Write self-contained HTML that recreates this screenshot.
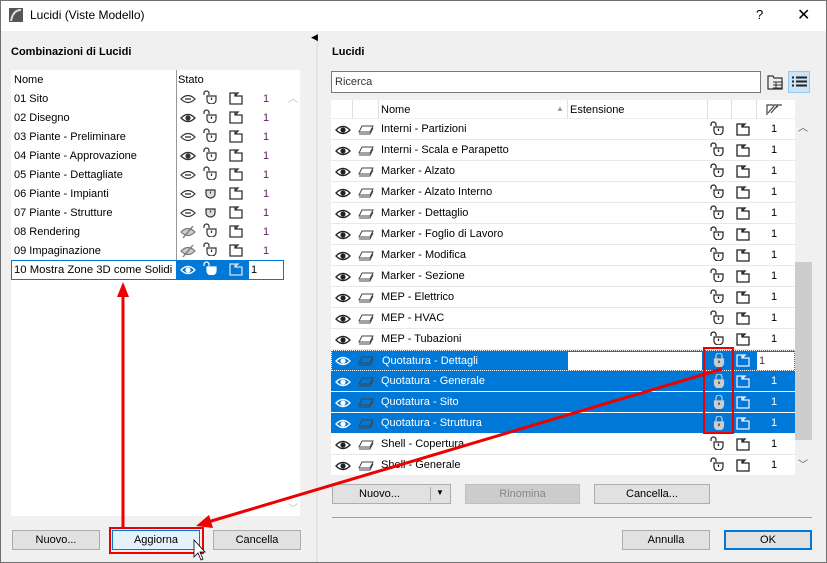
<!DOCTYPE html>
<html><head><meta charset="utf-8"><style>
*{margin:0;padding:0;box-sizing:border-box}
body{width:827px;height:563px;overflow:hidden;font-family:"Liberation Sans",sans-serif;font-size:11px;color:#000;background:#f0f0f0;position:relative}
.a{position:absolute}
.t{position:absolute;white-space:nowrap}
.btn{position:absolute;height:20px;border:1px solid #adadad;background:#e1e1e1;text-align:center;line-height:18px;font-size:11px}
svg{position:absolute;overflow:visible}
.row{position:absolute;left:0;width:464px;height:21px;border-bottom:1px solid #e8e8e8}
.sel{background:#0078d7;color:#fff;border-bottom:1px solid #fff}
</style></head><body>
<svg width="0" height="0" style="position:absolute">
<defs>
<symbol id="eye" viewBox="0 0 16 12"><path d="M1 6Q8 -1 15 6Q8 13 1 6Z" fill="none" stroke="currentColor" stroke-width="1.3"/><circle cx="8" cy="6" r="2.6" fill="currentColor"/></symbol>
<symbol id="eyed" viewBox="0 0 16 12"><path d="M1 6Q8 -1 15 6Q8 13 1 6Z" fill="none" stroke="currentColor" stroke-width="1.2"/><path d="M5 6H11" stroke="currentColor" stroke-width="1.3"/></symbol>
<symbol id="eyex" viewBox="0 0 16 12"><path d="M1 6Q8 -1 15 6Q8 13 1 6Z" fill="#ccc" stroke="#777" stroke-width="1.2"/><path d="M3 12L13 0" stroke="#777" stroke-width="1.3"/></symbol>
<symbol id="lay" viewBox="0 0 16 10"><path d="M4 1H15L12 7H1Z M1 9H12L15 3" fill="none" stroke="currentColor" stroke-width="1"/></symbol>
<symbol id="lko" viewBox="0 0 14 14"><path d="M1 5V3.5A2.5 2.5 0 0 1 6 3.5V5" fill="none" stroke="currentColor" stroke-width="1.2"/><path d="M4 6H13V10A4.5 4 0 0 1 4 10Z" fill="#fff" stroke="currentColor" stroke-width="1.2"/><path d="M8.5 7.5V10" stroke="currentColor" stroke-width="1.3"/></symbol>
<symbol id="lkc" viewBox="0 0 14 14"><path d="M4 3V6M10 3V6" stroke="currentColor" stroke-width="1.2"/><path d="M4 3A3 3 0 0 1 10 3" fill="none" stroke="currentColor" stroke-width="1.2"/><path d="M2.5 6H11.5V10A4.5 4 0 0 1 2.5 10Z" fill="#ccc" stroke="#ccc" stroke-width="1.2"/><path d="M7 7.5V10" stroke="#333" stroke-width="1.3"/></symbol>
<symbol id="sh" viewBox="0 0 14 14"><path d="M3 5H12V9A4.5 4 0 0 1 3 9Z" fill="#ddd" stroke="currentColor" stroke-width="1.2"/><path d="M7.5 6.5V8.5" stroke="currentColor" stroke-width="1.2"/></symbol>
<symbol id="doc" viewBox="0 0 14 14"><path d="M1 2H6V5H13V13H1Z M6 5L9 2H6" fill="none" stroke="currentColor" stroke-width="1.3"/></symbol>
</defs></svg>

<div class="a" style="left:0;top:0;width:827px;height:563px;border:1px solid #707070"></div>
<div class="a" style="left:1px;top:1px;width:825px;height:30px;background:#fff"></div>
<svg style="left:9px;top:8px" width="14" height="14"><rect width="14" height="14" fill="#555"/><path d="M2 13Q4 2 12 2" stroke="#ddd" stroke-width="2" fill="none"/></svg>
<div class="t" style="left:30px;top:8px;font-size:12px">Lucidi (Viste Modello)</div>
<div class="t" style="left:756px;top:7px;font-size:13px">?</div>
<div class="t" style="left:797px;top:5px;font-size:16px">✕</div>

<div class="a" style="left:316px;top:32px;width:2px;height:530px;background:#e4e4e4"></div>
<div class="t" style="left:311px;top:32px;font-size:9px">◀</div>

<div class="t" style="left:11px;top:46px;font-weight:bold;font-size:11px">Combinazioni di Lucidi</div>
<div class="a" style="left:11px;top:70px;width:289px;height:446px;background:#fff"></div>
<div class="a" style="left:283px;top:89px;width:17px;height:427px;background:#fff"></div>
<div class="a" style="left:176px;top:70px;width:1px;height:191px;background:#999"></div>
<div class="t" style="left:14px;top:74px">Nome</div>
<div class="t" style="left:178px;top:74px">Stato</div>
<div class="t" style="left:288px;top:90px;color:#bbb;font-size:10px">︿</div>
<div class="t" style="left:288px;top:500px;color:#bbb;font-size:10px">﹀</div>

<div class="t" style="left:14px;top:93px">01 Sito</div>
<div class="t" style="left:14px;top:112px">02 Disegno</div>
<div class="t" style="left:14px;top:131px">03 Piante - Preliminare</div>
<div class="t" style="left:14px;top:150px">04 Piante - Approvazione</div>
<div class="t" style="left:14px;top:169px">05 Piante - Dettagliate</div>
<div class="t" style="left:14px;top:188px">06 Piante - Impianti</div>
<div class="t" style="left:14px;top:207px">07 Piante - Strutture</div>
<div class="t" style="left:14px;top:226px">08 Rendering</div>
<div class="t" style="left:14px;top:245px">09 Impaginazione</div>

<div style="color:#333">
<svg style="left:180px;top:93px" width="16" height="12"><use href="#eyed"/></svg>
<svg style="left:180px;top:112px" width="16" height="12"><use href="#eye"/></svg>
<svg style="left:180px;top:131px" width="16" height="12"><use href="#eyed"/></svg>
<svg style="left:180px;top:150px" width="16" height="12"><use href="#eye"/></svg>
<svg style="left:180px;top:169px" width="16" height="12"><use href="#eyed"/></svg>
<svg style="left:180px;top:188px" width="16" height="12"><use href="#eyed"/></svg>
<svg style="left:180px;top:207px" width="16" height="12"><use href="#eyed"/></svg>
<svg style="left:180px;top:226px" width="16" height="12"><use href="#eyex"/></svg>
<svg style="left:180px;top:245px" width="16" height="12"><use href="#eyex"/></svg>

<svg style="left:203px;top:90px" width="14" height="14"><use href="#lko"/></svg>
<svg style="left:203px;top:109px" width="14" height="14"><use href="#lko"/></svg>
<svg style="left:203px;top:128px" width="14" height="14"><use href="#lko"/></svg>
<svg style="left:203px;top:147px" width="14" height="14"><use href="#lko"/></svg>
<svg style="left:203px;top:166px" width="14" height="14"><use href="#lko"/></svg>
<svg style="left:203px;top:185px" width="14" height="14"><use href="#sh"/></svg>
<svg style="left:203px;top:204px" width="14" height="14"><use href="#sh"/></svg>
<svg style="left:203px;top:223px" width="14" height="14"><use href="#lko"/></svg>
<svg style="left:203px;top:242px" width="14" height="14"><use href="#lko"/></svg>

<svg style="left:229px;top:91px" width="14" height="14"><use href="#doc"/></svg>
<svg style="left:229px;top:110px" width="14" height="14"><use href="#doc"/></svg>
<svg style="left:229px;top:129px" width="14" height="14"><use href="#doc"/></svg>
<svg style="left:229px;top:148px" width="14" height="14"><use href="#doc"/></svg>
<svg style="left:229px;top:167px" width="14" height="14"><use href="#doc"/></svg>
<svg style="left:229px;top:186px" width="14" height="14"><use href="#doc"/></svg>
<svg style="left:229px;top:205px" width="14" height="14"><use href="#doc"/></svg>
<svg style="left:229px;top:224px" width="14" height="14"><use href="#doc"/></svg>
<svg style="left:229px;top:243px" width="14" height="14"><use href="#doc"/></svg>
</div>
<div style="color:#602060">
<div class="t" style="left:263px;top:93px">1</div><div class="t" style="left:263px;top:112px">1</div><div class="t" style="left:263px;top:131px">1</div><div class="t" style="left:263px;top:150px">1</div><div class="t" style="left:263px;top:169px">1</div><div class="t" style="left:263px;top:188px">1</div><div class="t" style="left:263px;top:207px">1</div><div class="t" style="left:263px;top:226px">1</div><div class="t" style="left:263px;top:245px">1</div>
</div>
<div class="a" style="left:11px;top:260px;width:273px;height:20px;border:1px solid #0078d7;background:#fff"></div>
<div class="a" style="left:176px;top:261px;width:73px;height:18px;background:#0078d7"></div>
<div class="t" style="left:14px;top:264px;font-size:11.3px">10 Mostra Zone 3D come Solidi</div>
<svg style="left:180px;top:264px;color:#fff" width="16" height="12"><use href="#eye"/></svg>
<svg style="left:203px;top:261px;color:#fff" width="14" height="14"><use href="#lko"/></svg>
<svg style="left:229px;top:262px;color:#dde" width="14" height="14"><use href="#doc"/></svg>
<div class="t" style="left:251px;top:264px">1</div>

<div class="btn" style="left:12px;top:530px;width:88px">Nuovo...</div>
<div class="btn" style="left:112px;top:530px;width:88px;background:#e5f1fb;border-color:#0078d7">Aggiorna</div>
<div class="btn" style="left:213px;top:530px;width:88px">Cancella</div>

<div class="t" style="left:332px;top:46px;font-weight:bold">Lucidi</div>
<div class="a" style="left:331px;top:71px;width:430px;height:22px;background:#fff;border:1px solid #7a7a7a"></div>
<div class="t" style="left:335px;top:76px;color:#333">Ricerca</div>
<svg style="left:767px;top:74px" width="18" height="16"><path d="M1 2H6L7 4H15V15H1Z" fill="none" stroke="#333" stroke-width="1.2"/><path d="M6 8H16M6 11H16M6 14H16M9 8V15" stroke="#333"/></svg>
<div class="a" style="left:788px;top:71px;width:22px;height:22px;background:#cce4f7;border:1px solid #99c9ef"></div>
<svg style="left:792px;top:76px" width="15" height="12"><path d="M0 1.5H2M4 1.5H15M0 5.5H2M4 5.5H15M0 9.5H2M4 9.5H15" stroke="#222" stroke-width="2"/></svg>

<div class="a" style="left:331px;top:100px;width:464px;height:375px;background:#fff;overflow:hidden">
 <div class="a" style="left:0;top:0;width:464px;height:19px;background:#fff;border-bottom:1px solid #eee"></div>
 <div class="a" style="left:21px;top:0;width:1px;height:19px;background:#e0e0e0"></div>
 <div class="a" style="left:47px;top:0;width:1px;height:19px;background:#e0e0e0"></div>
 <div class="a" style="left:236px;top:0;width:1px;height:19px;background:#e0e0e0"></div>
 <div class="a" style="left:376px;top:0;width:1px;height:19px;background:#e0e0e0"></div>
 <div class="a" style="left:400px;top:0;width:1px;height:19px;background:#e0e0e0"></div>
 <div class="a" style="left:425px;top:0;width:1px;height:19px;background:#e0e0e0"></div>
 <div class="t" style="left:50px;top:4px">Nome</div>
 <div class="t" style="left:225px;top:4px;color:#999;font-size:8px">▲</div>
 <div class="t" style="left:239px;top:4px">Estensione</div>
 <svg style="left:435px;top:3px" width="16" height="12"><path d="M1 12V2H16M2 10L8 3M5 10L11 3M8 6L12 3" stroke="#444" stroke-width="1.2" fill="none"/></svg>
</div>
<div class="a" style="left:795px;top:119px;width:17px;height:356px;background:#f0f0f0"></div>
<div class="a" style="left:795px;top:262px;width:17px;height:178px;background:#cdcdcd"></div>
<div class="t" style="left:798px;top:119px;color:#555;font-size:10px">︿</div>
<div class="t" style="left:798px;top:456px;color:#555;font-size:10px">﹀</div>

<div class="a" style="left:331px;top:119px;width:464px;height:356px;overflow:hidden">
<div class="row" style="top:0"><div class="t" style="left:50px;top:4px">Interni - Partizioni</div></div>
<div class="row" style="top:21px"><div class="t" style="left:50px;top:4px">Interni - Scala e Parapetto</div></div>
<div class="row" style="top:42px"><div class="t" style="left:50px;top:4px">Marker - Alzato</div></div>
<div class="row" style="top:63px"><div class="t" style="left:50px;top:4px">Marker - Alzato Interno</div></div>
<div class="row" style="top:84px"><div class="t" style="left:50px;top:4px">Marker - Dettaglio</div></div>
<div class="row" style="top:105px"><div class="t" style="left:50px;top:4px">Marker - Foglio di Lavoro</div></div>
<div class="row" style="top:126px"><div class="t" style="left:50px;top:4px">Marker - Modifica</div></div>
<div class="row" style="top:147px"><div class="t" style="left:50px;top:4px">Marker - Sezione</div></div>
<div class="row" style="top:168px"><div class="t" style="left:50px;top:4px">MEP - Elettrico</div></div>
<div class="row" style="top:189px"><div class="t" style="left:50px;top:4px">MEP - HVAC</div></div>
<div class="row" style="top:210px"><div class="t" style="left:50px;top:4px">MEP - Tubazioni</div></div>
<div class="row sel" style="top:231px;border:1px dotted #fff"><div class="t" style="left:50px;top:4px">Quotatura - Dettagli</div><div class="a" style="left:236px;top:1px;width:134px;height:18px;background:#fff"></div><div class="a" style="left:425px;top:1px;width:37px;height:18px;background:#fff"></div><div class="t" style="left:427px;top:4px;color:#602060">1</div></div>
<div class="row sel" style="top:252px"><div class="t" style="left:50px;top:4px">Quotatura - Generale</div></div>
<div class="row sel" style="top:273px"><div class="t" style="left:50px;top:4px">Quotatura - Sito</div></div>
<div class="row sel" style="top:294px"><div class="t" style="left:50px;top:4px">Quotatura - Struttura</div></div>
<div class="row" style="top:315px"><div class="t" style="left:50px;top:4px">Shell - Copertura</div></div>
<div class="row" style="top:336px"><div class="t" style="left:50px;top:4px">Shell - Generale</div></div>
</div>

<div style="color:#222">
<svg style="left:335px;top:124px" width="16" height="12"><use href="#eye"/></svg><svg style="left:335px;top:145px" width="16" height="12"><use href="#eye"/></svg><svg style="left:335px;top:166px" width="16" height="12"><use href="#eye"/></svg><svg style="left:335px;top:187px" width="16" height="12"><use href="#eye"/></svg><svg style="left:335px;top:208px" width="16" height="12"><use href="#eye"/></svg><svg style="left:335px;top:229px" width="16" height="12"><use href="#eye"/></svg><svg style="left:335px;top:250px" width="16" height="12"><use href="#eye"/></svg><svg style="left:335px;top:271px" width="16" height="12"><use href="#eye"/></svg><svg style="left:335px;top:292px" width="16" height="12"><use href="#eye"/></svg><svg style="left:335px;top:313px" width="16" height="12"><use href="#eye"/></svg><svg style="left:335px;top:334px" width="16" height="12"><use href="#eye"/></svg>
<svg style="left:335px;top:439px" width="16" height="12"><use href="#eye"/></svg><svg style="left:335px;top:460px" width="16" height="12"><use href="#eye"/></svg>
</div>
<div style="color:#fff">
<svg style="left:335px;top:355px" width="16" height="12"><use href="#eye"/></svg><svg style="left:335px;top:376px" width="16" height="12"><use href="#eye"/></svg><svg style="left:335px;top:397px" width="16" height="12"><use href="#eye"/></svg><svg style="left:335px;top:418px" width="16" height="12"><use href="#eye"/></svg>
</div>
<div style="color:#444">
<svg style="left:358px;top:125px" width="16" height="10"><use href="#lay"/></svg><svg style="left:358px;top:146px" width="16" height="10"><use href="#lay"/></svg><svg style="left:358px;top:167px" width="16" height="10"><use href="#lay"/></svg><svg style="left:358px;top:188px" width="16" height="10"><use href="#lay"/></svg><svg style="left:358px;top:209px" width="16" height="10"><use href="#lay"/></svg><svg style="left:358px;top:230px" width="16" height="10"><use href="#lay"/></svg><svg style="left:358px;top:251px" width="16" height="10"><use href="#lay"/></svg><svg style="left:358px;top:272px" width="16" height="10"><use href="#lay"/></svg><svg style="left:358px;top:293px" width="16" height="10"><use href="#lay"/></svg><svg style="left:358px;top:314px" width="16" height="10"><use href="#lay"/></svg><svg style="left:358px;top:335px" width="16" height="10"><use href="#lay"/></svg>
<svg style="left:358px;top:356px" width="16" height="10"><use href="#lay"/></svg><svg style="left:358px;top:377px" width="16" height="10"><use href="#lay"/></svg><svg style="left:358px;top:398px" width="16" height="10"><use href="#lay"/></svg><svg style="left:358px;top:419px" width="16" height="10"><use href="#lay"/></svg>
<svg style="left:358px;top:440px" width="16" height="10"><use href="#lay"/></svg><svg style="left:358px;top:461px" width="16" height="10"><use href="#lay"/></svg>
</div>
<div style="color:#222">
<svg style="left:710px;top:121px" width="14" height="14"><use href="#lko"/></svg><svg style="left:710px;top:142px" width="14" height="14"><use href="#lko"/></svg><svg style="left:710px;top:163px" width="14" height="14"><use href="#lko"/></svg><svg style="left:710px;top:184px" width="14" height="14"><use href="#lko"/></svg><svg style="left:710px;top:205px" width="14" height="14"><use href="#lko"/></svg><svg style="left:710px;top:226px" width="14" height="14"><use href="#lko"/></svg><svg style="left:710px;top:247px" width="14" height="14"><use href="#lko"/></svg><svg style="left:710px;top:268px" width="14" height="14"><use href="#lko"/></svg><svg style="left:710px;top:289px" width="14" height="14"><use href="#lko"/></svg><svg style="left:710px;top:310px" width="14" height="14"><use href="#lko"/></svg><svg style="left:710px;top:331px" width="14" height="14"><use href="#lko"/></svg>
<svg style="left:710px;top:436px" width="14" height="14"><use href="#lko"/></svg><svg style="left:710px;top:457px" width="14" height="14"><use href="#lko"/></svg>
<svg style="left:736px;top:122px" width="14" height="14"><use href="#doc"/></svg><svg style="left:736px;top:143px" width="14" height="14"><use href="#doc"/></svg><svg style="left:736px;top:164px" width="14" height="14"><use href="#doc"/></svg><svg style="left:736px;top:185px" width="14" height="14"><use href="#doc"/></svg><svg style="left:736px;top:206px" width="14" height="14"><use href="#doc"/></svg><svg style="left:736px;top:227px" width="14" height="14"><use href="#doc"/></svg><svg style="left:736px;top:248px" width="14" height="14"><use href="#doc"/></svg><svg style="left:736px;top:269px" width="14" height="14"><use href="#doc"/></svg><svg style="left:736px;top:290px" width="14" height="14"><use href="#doc"/></svg><svg style="left:736px;top:311px" width="14" height="14"><use href="#doc"/></svg><svg style="left:736px;top:332px" width="14" height="14"><use href="#doc"/></svg>
<svg style="left:736px;top:437px" width="14" height="14"><use href="#doc"/></svg><svg style="left:736px;top:458px" width="14" height="14"><use href="#doc"/></svg>
</div>
<div style="color:#ccc">
<svg style="left:712px;top:353px" width="14" height="14"><use href="#lkc"/></svg><svg style="left:712px;top:374px" width="14" height="14"><use href="#lkc"/></svg><svg style="left:712px;top:395px" width="14" height="14"><use href="#lkc"/></svg><svg style="left:712px;top:416px" width="14" height="14"><use href="#lkc"/></svg>
</div>
<div style="color:#eef">
<svg style="left:736px;top:353px" width="14" height="14"><use href="#doc"/></svg><svg style="left:736px;top:374px" width="14" height="14"><use href="#doc"/></svg><svg style="left:736px;top:395px" width="14" height="14"><use href="#doc"/></svg><svg style="left:736px;top:416px" width="14" height="14"><use href="#doc"/></svg>
</div>
<div style="color:#000">
<div class="t" style="left:771px;top:123px">1</div><div class="t" style="left:771px;top:144px">1</div><div class="t" style="left:771px;top:165px">1</div><div class="t" style="left:771px;top:186px">1</div><div class="t" style="left:771px;top:207px">1</div><div class="t" style="left:771px;top:228px">1</div><div class="t" style="left:771px;top:249px">1</div><div class="t" style="left:771px;top:270px">1</div><div class="t" style="left:771px;top:291px">1</div><div class="t" style="left:771px;top:312px">1</div><div class="t" style="left:771px;top:333px">1</div>
<div class="t" style="left:771px;top:375px;color:#fff">1</div><div class="t" style="left:771px;top:396px;color:#fff">1</div><div class="t" style="left:771px;top:417px;color:#fff">1</div>
<div class="t" style="left:771px;top:438px">1</div><div class="t" style="left:771px;top:459px">1</div>
</div>

<div class="btn" style="left:332px;top:484px;width:119px;text-align:left;padding-left:26px">Nuovo...</div>
<div class="a" style="left:430px;top:487px;width:1px;height:14px;background:#aaa"></div>
<div class="t" style="left:436px;top:488px;font-size:8px">▼</div>
<div class="btn" style="left:465px;top:484px;width:115px;background:#ccc;border-color:#bfbfbf;color:#888">Rinomina</div>
<div class="btn" style="left:594px;top:484px;width:116px">Cancella...</div>
<div class="a" style="left:332px;top:517px;width:480px;height:1px;background:#a0a0a0"></div>
<div class="btn" style="left:622px;top:530px;width:88px">Annulla</div>
<div class="btn" style="left:724px;top:530px;width:88px;border:2px solid #0078d7;line-height:16px">OK</div>

<div class="a" style="left:703px;top:347px;width:31px;height:87px;border:2px solid #e00"></div>
<div class="a" style="left:109px;top:527px;width:95px;height:27px;border:2px solid #e00"></div>
<svg style="left:0;top:0" width="827" height="563">
<path d="M123 527V292" stroke="#e00" stroke-width="3"/>
<path d="M117 297L123 282L129 297Z" fill="#e00"/>
<path d="M722 369L208 522" stroke="#e00" stroke-width="3"/>
<path d="M196 526L209 515L213 528Z" fill="#e00"/>
<path d="M194 540L194 557L198 553L201 560L203 559L200 552L205 552Z" fill="#fff" stroke="#000" stroke-width="0.8"/>
</svg>
</body></html>
